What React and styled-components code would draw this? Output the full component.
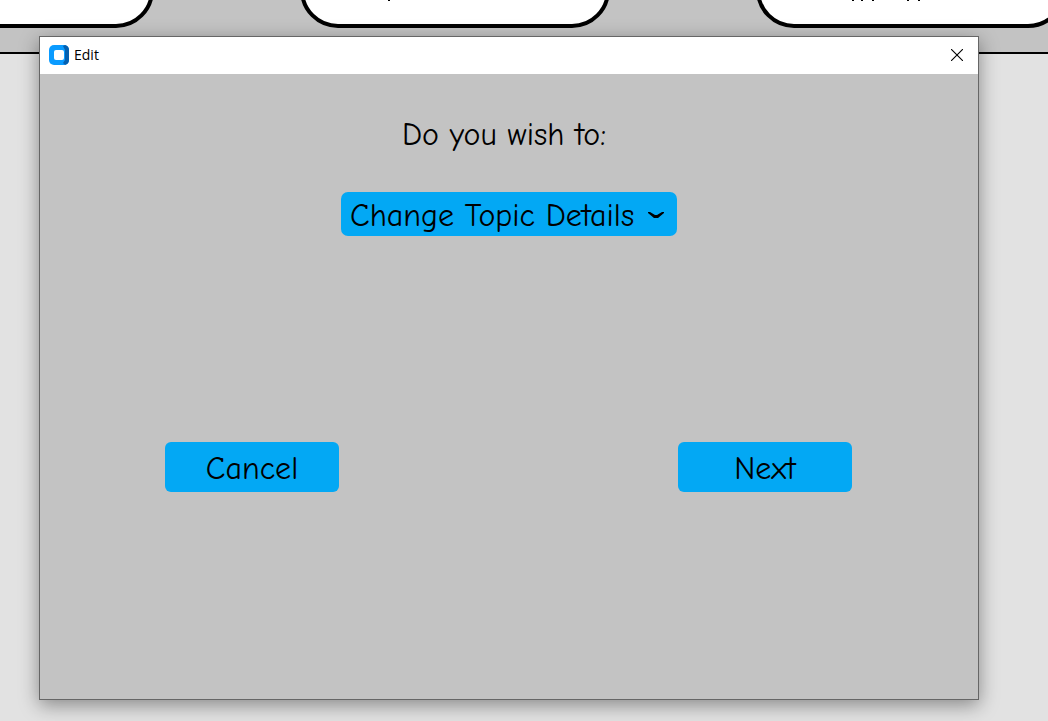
import React from "react";
import styled, { createGlobalStyle } from "styled-components";

const GlobalStyle = createGlobalStyle`
  *, *::before, *::after { box-sizing: border-box; }
  html, body, #root { height: 100%; }
  body {
    margin: 0;
    background: #e2e2e2;
    color: #000;
    font-family: "Comic Sans MS", "Comic Neue", "Noto Sans", sans-serif;
    overflow: hidden;
  }
`;

const Page = styled.div`
  position: relative;
  min-height: 100%;
  overflow: hidden;
`;

const TopicBar = styled.header`
  display: flex;
  gap: 146px;
  height: 54px;
  padding-bottom: 24px;
  align-items: flex-end;
  background: #c3c3c3;
  border-bottom: 2px solid #000;
  overflow: hidden;
`;

const Topic = styled.div`
  flex: 0 0 310px;
  height: 80px;
  background: #fff;
  border: 4px solid #000;
  border-radius: 38px;

  &:first-child { margin-left: -156px; }
`;

const Descenders = styled.svg`
  display: block;
  width: 302px;
  height: 2px;
  margin-top: 48px;
`;

const Dialog = styled.section`
  position: absolute;
  inset: 36px 69px 21px 39px;
  display: flex;
  flex-direction: column;
  background: #c3c3c3;
  border: 1px solid #666;
  box-shadow: 0 5px 18px rgba(0, 0, 0, 0.4);
`;

const TitleBar = styled.div`
  display: flex;
  align-items: center;
  height: 37px;
  padding: 0 0 1px 9px;
  background: #fff;
`;

const Title = styled.h1`
  flex: 1;
  margin: 0 0 0 5px;
  font: 400 14px/20px "Segoe UI", "Open Sans", sans-serif;
`;

const CloseButton = styled.button`
  display: flex;
  align-items: center;
  justify-content: center;
  width: 42px;
  height: 36px;
  padding: 0;
  border: 0;
  background: none;
`;

const Content = styled.form`
  display: flex;
  flex-direction: column;
  align-items: center;
  padding-top: 39px;
  font-size: 32px;
`;

const Prompt = styled.label`
  margin-right: 10px;
  line-height: 44px;
`;

const SelectBox = styled.div`
  display: grid;
  align-items: center;
  width: 336px;
  margin-top: 35px;

  > * { grid-area: 1 / 1; }
  > svg { justify-self: end; margin: 2px 13px 0 0; pointer-events: none; }
`;

const Select = styled.select`
  appearance: none;
  width: 100%;
  height: 44px;
  padding: 4px 0 0 9px;
  border: 0;
  border-radius: 7px;
  background: #03a8f4;
  color: #000;
  font: inherit;
  line-height: 40px;
`;

const Actions = styled.div`
  display: flex;
  justify-content: space-between;
  width: 100%;
  margin-top: 206px;
  padding: 0 126px 0 125px;
`;

const ActionButton = styled.button`
  width: 174px;
  height: 50px;
  padding: 4px 0 0;
  border: 0;
  border-radius: 6px;
  background: #03a8f4;
  color: #000;
  font: inherit;
  line-height: 46px;
`;

function AppIcon() {
  return (
    <svg width="20" height="20" viewBox="0 0 20 20" aria-hidden="true">
      <rect width="20" height="20" rx="5" fill="#0a9bff" />
      <path d="M14 1 L16 0 Q20 1 20 5 V15 Q20 19 16 20 L14 18 L16 15 V5 Z" fill="#0560b0" />
      <rect x="5" y="5" width="10" height="10" rx="2" fill="#fff" />
    </svg>
  );
}

export default function App() {
  return (
    <>
      <GlobalStyle />
      <Page>
        <TopicBar>
          <Topic />
          <Topic>
            <Descenders viewBox="0 0 302 2" aria-hidden="true">
              <path d="M84 0h2v1h-2z" />
            </Descenders>
          </Topic>
          <Topic>
            <Descenders viewBox="0 0 302 2" aria-hidden="true">
              <path d="M92 0h2v1h-2z M101 0h2v1h-2z M112 0h2v1h-2z M147 0h2v1h-2z M158 0h2v1h-2z" />
            </Descenders>
          </Topic>
        </TopicBar>
        <Dialog role="dialog" aria-labelledby="dialog-title">
          <TitleBar>
            <AppIcon />
            <Title id="dialog-title">Edit</Title>
            <CloseButton type="button" aria-label="Close">
              <svg width="12" height="12" viewBox="0 0 12 12" aria-hidden="true">
                <path d="M0 0L12 12M12 0L0 12" stroke="#000" strokeWidth="1.1" />
              </svg>
            </CloseButton>
          </TitleBar>
          <Content onSubmit={(e) => e.preventDefault()}>
            <Prompt htmlFor="edit-action">Do you wish to:</Prompt>
            <SelectBox>
              <Select id="edit-action">
                <option>Change Topic Details</option>
              </Select>
              <svg width="16" height="8" viewBox="0 0 16 8" aria-hidden="true">
                <path d="M0 1H2L7 4H9L14 1H16V2L10 7H6L0 2Z" fill="#000" />
              </svg>
            </SelectBox>
            <Actions>
              <ActionButton type="button">Cancel</ActionButton>
              <ActionButton type="submit">Next</ActionButton>
            </Actions>
          </Content>
        </Dialog>
      </Page>
    </>
  );
}
